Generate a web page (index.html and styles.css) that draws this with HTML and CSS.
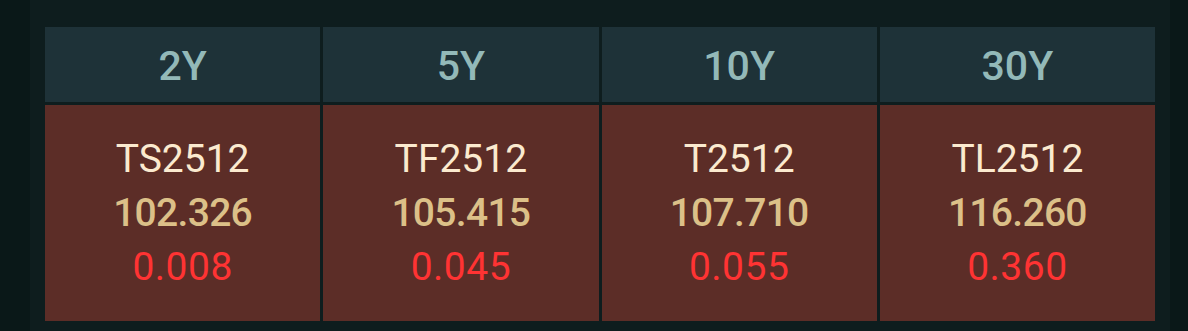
FILE: index.html
```html
<!DOCTYPE html>
<html>
<head>
<meta charset="utf-8">
<link rel="stylesheet" href="styles.css">
</head>
<body>
<div class="panel">
  <div class="grid">
    <div class="head">2Y</div>
    <div class="head">5Y</div>
    <div class="head">10Y</div>
    <div class="head">30Y</div>
    <div class="cell">
      <div class="name">TS2512</div>
      <div class="price">102.326</div>
      <div class="chg">0.008</div>
    </div>
    <div class="cell">
      <div class="name">TF2512</div>
      <div class="price">105.415</div>
      <div class="chg">0.045</div>
    </div>
    <div class="cell">
      <div class="name">T2512</div>
      <div class="price">107.710</div>
      <div class="chg">0.055</div>
    </div>
    <div class="cell">
      <div class="name">TL2512</div>
      <div class="price">116.260</div>
      <div class="chg">0.360</div>
    </div>
  </div>
</div>
</body>
</html>
```
FILE: styles.css
```css
html, body {
  margin: 0;
  padding: 0;
  background: #0a1818;
  height: 331px;
  overflow: hidden;
}
body {
  padding: 0 18px 0 30px;
  font-family: Roboto, "Liberation Sans", sans-serif;
}
.panel {
  background: #0e1d1e;
  height: 331px;
  padding: 27px 15px 0 15px;
  box-sizing: border-box;
}
.grid {
  display: grid;
  grid-template-columns: repeat(4, 1fr);
  grid-template-rows: 75px 216px;
  gap: 3px;
}
.head {
  background: #1e3238;
  color: #93b9b8;
  font-size: 41px;
  font-weight: 500;
  display: flex;
  align-items: center;
  justify-content: center;
  padding-top: 3px;
  box-sizing: border-box;
}
.cell {
  background: #5c2d27;
  display: flex;
  flex-direction: column;
  align-items: center;
  justify-content: center;
  line-height: 54px;
}
.name {
  color: #fbeacf;
  font-size: 39px;
}
.price {
  color: #dcc088;
  font-size: 39px;
  font-weight: 500;
  letter-spacing: -0.7px;
}
.chg {
  color: #ff3333;
  font-size: 39px;
  letter-spacing: 0.5px;
}
```
